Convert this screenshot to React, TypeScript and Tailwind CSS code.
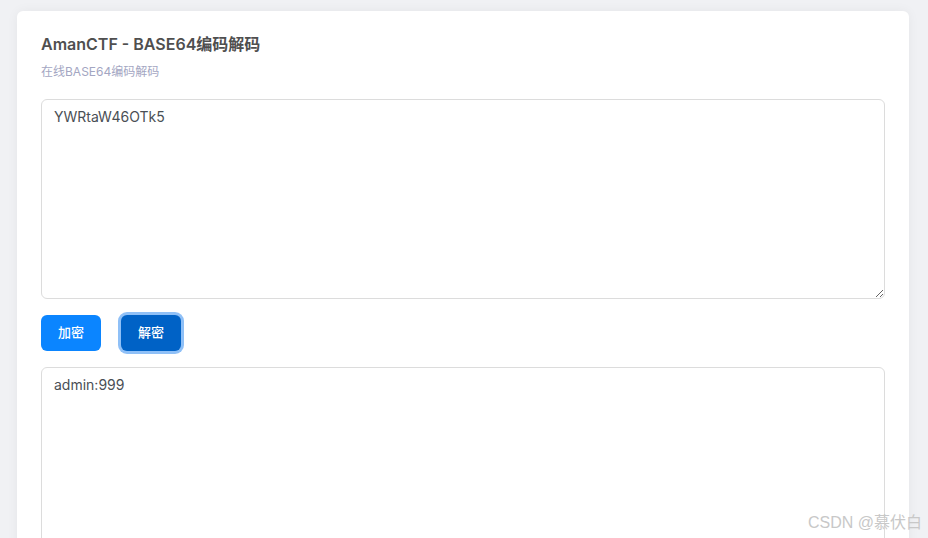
export default function App() {
  return (
    <div
      className="bg-[#f0f1f4] pt-[11px] pl-[17px] pr-[19px] pb-6 relative overflow-hidden h-[538px]"
      style={{ fontFamily: "Inter, 'Noto Sans CJK SC', sans-serif" }}
    >
      <div className="bg-white rounded-md shadow-[0_0_12px_rgba(0,0,0,0.05)] px-6 pt-[23px] pb-6">
        <h1 className="text-[16px] leading-[20px] font-semibold text-[#4f4f4f]">
          AmanCTF - BASE64编码解码
        </h1>
        <p className="mt-[10px] text-[12px] leading-[16px] text-[#a3a6c2]">在线BASE64编码解码</p>

        <textarea
          className="mt-[19px] block w-full h-[200px] border border-[#dcdcdc] rounded-md px-3 py-[7px] text-[14px] leading-[20px] text-[#4a4f55] outline-none"
          defaultValue="YWRtaW46OTk5"
        />

        <div className="flex gap-5 mt-4">
          <button className="w-[60px] h-[36px] rounded-md bg-[#0b85ff] text-white text-[13px] font-medium">
            加密
          </button>
          <button className="w-[60px] h-[36px] rounded-md bg-[#0062c6] text-white text-[13px] font-medium ring-[3px] ring-[#8fc0f7]">
            解密
          </button>
        </div>

        <textarea
          className="mt-4 block w-full h-[200px] border border-[#dcdcdc] rounded-md px-3 py-[7px] text-[14px] leading-[20px] text-[#4a4f55] outline-none"
          defaultValue="admin:999"
        />
      </div>

      <div
        className="absolute right-[6px] bottom-[5px] text-[16px] leading-[20px] text-[#c8c8c8]"
        style={{ fontFamily: "'Liberation Sans', 'Noto Sans CJK SC', sans-serif" }}
      >
        CSDN @慕伏白
      </div>
    </div>
  );
}
